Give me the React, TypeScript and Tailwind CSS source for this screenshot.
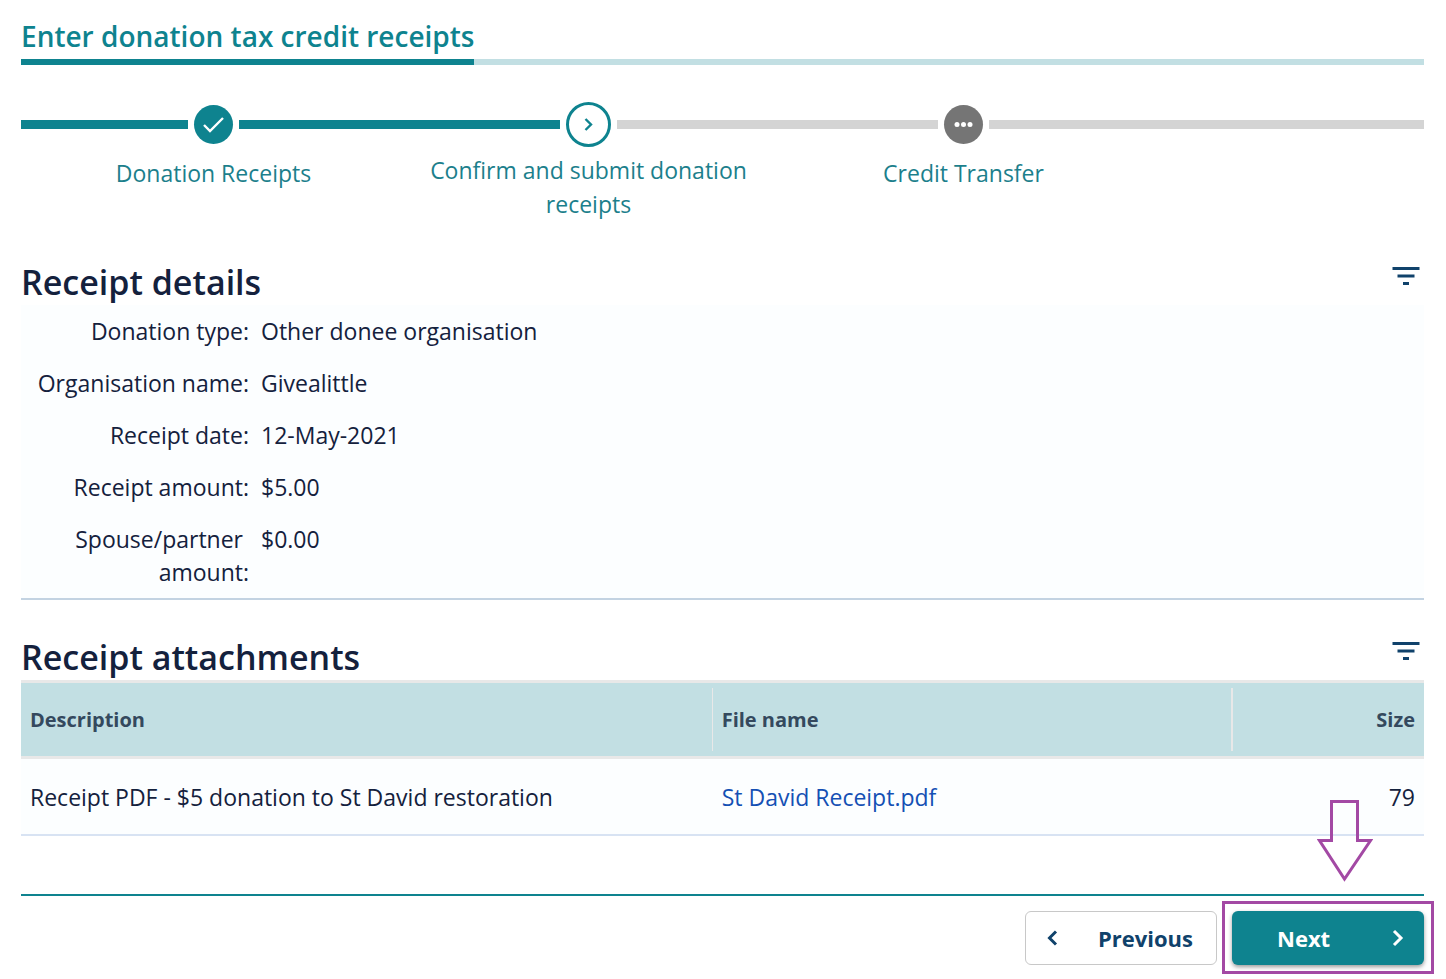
import type { ReactNode } from "react";

type StepState = "done" | "current" | "todo";

const details: { label: ReactNode; value: string }[] = [
  { label: "Donation type:", value: "Other donee organisation" },
  { label: "Organisation name:", value: "Givealittle" },
  { label: "Receipt date:", value: "12-May-2021" },
  { label: "Receipt amount:", value: "$5.00" },
  { label: <>Spouse/partner&nbsp;<br />amount:</>, value: "$0.00" },
];

const attachments = [
  { description: "Receipt PDF - $5 donation to St David restoration", file: "St David Receipt.pdf", size: 79 },
];

export default function App() {
  return (
    <main className="min-h-screen bg-white px-[22px] pt-4 pl-[21px] font-['Open_Sans','Noto_Sans',sans-serif] text-[23px] leading-[34px] text-[#14213d]">
      <PageTitle />
      <Stepper />

      <section className="mt-[39px]">
        <SectionHeader title="Receipt details" />
        <dl className="flex flex-col gap-px border-b-2 border-[#c3d3e2] bg-[#fcfeff] pt-px leading-[33px]">
          {details.map((d) => (
            <div key={d.value} className="flex gap-3 py-[9px]">
              <dt className="w-[228px] shrink-0 text-right">{d.label}</dt>
              <dd>{d.value}</dd>
            </div>
          ))}
        </dl>
      </section>

      <section className="mt-[35px]">
        <SectionHeader title="Receipt attachments" />
        <AttachmentTable />
      </section>

      <footer className="mt-[58px] flex justify-end gap-[15px] border-t-2 border-[#0e838f] pt-[15px] text-[22px]">
        <button
          type="button"
          className="flex h-[54px] w-[192px] items-center justify-between rounded-md border border-[#c8c8c8] bg-white pr-[23px] pl-5 font-bold text-[#10426b]"
        >
          <Chevron dir="left" />
          Previous
        </button>
        <div className="relative">
          <button
            type="button"
            className="flex h-[54px] w-[192px] items-center justify-between rounded-md bg-[#0e838f] pr-[20px] pl-[45px] font-bold text-white shadow-[0_2px_4px_rgba(0,0,0,0.4)]"
          >
            Next
            <Chevron dir="right" />
          </button>
          <NextHighlight />
        </div>
      </footer>
    </main>
  );
}

/* ============ Title with two-tone underline ============ */
function PageTitle() {
  return (
    <header className="flex">
      <h1 className="border-b-[6px] border-[#0e838f] pb-[3px] text-[28px] leading-10 font-semibold text-[#0e838f]">
        Enter donation tax credit receipts
      </h1>
      <div className="flex-1 border-b-[6px] border-[#c2dfe3]" />
    </header>
  );
}

/* ============ Stepper ============ */
function Stepper() {
  return (
    <ol className="mt-[37px] grid grid-cols-[5px_375fr_375fr_375fr_273fr] text-[#1c7f8c]">
      <li aria-hidden="true" className="flex h-[45px] items-center">
        <Track filled />
      </li>
      <Step state="done" label="Donation Receipts" before after />
      <Step state="current" label="Confirm and submit donation receipts" before />
      <Step state="todo" label="Credit Transfer" />
      <li aria-hidden="true" className="flex h-[45px] items-center">
        <Track />
      </li>
    </ol>
  );
}

function Track({ filled = false }: { filled?: boolean }) {
  return <div className={`h-[9px] flex-1 ${filled ? "bg-[#0e838f]" : "bg-[#d4d4d4]"}`} />;
}

function Step({ state, label, before, after }: { state: StepState; label: string; before?: boolean; after?: boolean }) {
  return (
    <li aria-current={state === "current" ? "step" : undefined}>
      <div className="flex h-[45px] items-center gap-[6px]">
        <Track filled={before} />
        <StepDot state={state} />
        <Track filled={after} />
      </div>
      <p className={`px-6 text-center ${state === "current" ? "mt-[6px]" : "mt-[9px]"}`}>{label}</p>
    </li>
  );
}

function StepDot({ state }: { state: StepState }) {
  if (state === "current") {
    return (
      <span className="flex size-[45px] items-center justify-center rounded-full border-[3px] border-[#0e838f] text-[#0e838f]">
        <svg width="9" height="13" viewBox="0 0 9 13" fill="none" stroke="currentColor" strokeWidth="2.4" aria-hidden="true">
          <path d="M1.500 1 7 6.500 1.500 12" />
        </svg>
      </span>
    );
  }
  if (state === "done") {
    return (
      <span className="flex size-[39px] items-center justify-center rounded-full bg-[#0e838f]">
        <svg width="21" height="17" viewBox="0 0 21 17" fill="none" stroke="#fff" strokeWidth="2.4" aria-hidden="true">
          <path d="M1 9 7 15 20 2" />
        </svg>
      </span>
    );
  }
  return (
    <span className="flex size-[39px] items-center justify-center rounded-full bg-[#757575]">
      <svg width="19" height="5" viewBox="0 0 19 5" fill="#fff" aria-hidden="true">
        <circle cx="3" cy="2.500" r="2.500" />
        <circle cx="9.500" cy="2.500" r="2.500" />
        <circle cx="16" cy="2.500" r="2.500" />
      </svg>
    </span>
  );
}

/* ============ Section heading + filter button ============ */
function SectionHeader({ title }: { title: string }) {
  return (
    <div className="flex items-start justify-between">
      <h2 className="text-[34px] leading-[45px] font-semibold">{title}</h2>
      <button type="button" aria-label="Filter" className="mt-[7px] mr-1 text-[#10426b]">
        <svg width="28" height="18" viewBox="0 0 28 18" fill="currentColor" aria-hidden="true">
          <path d="M.5 0h27v3H.5zM5.500 7.500h17v3h-17zM11 15h6v3h-6z" />
        </svg>
      </button>
    </div>
  );
}

/* ============ Attachments ============ */
function AttachmentTable() {
  return (
    <table className="w-full table-fixed border-collapse">
      <colgroup>
        <col className="w-[49.3%]" />
        <col className="w-[37.1%]" />
        <col />
      </colgroup>
      <thead>
        <tr className="border-y-[3px] border-[#e8e8e8] bg-[#c2dfe3] text-left text-[20px] text-[#34495e]">
          <th className="py-[5px]">
            <div className="flex h-[63px] items-center border-r border-[#e8e8e8] px-[9px]">Description</div>
          </th>
          <th className="py-[5px]">
            <div className="flex h-[63px] items-center border-r-2 border-[#e8e8e8] px-[9px]">File name</div>
          </th>
          <th className="px-[9px] text-right">Size</th>
        </tr>
      </thead>
      <tbody>
        {attachments.map((a) => (
          <tr key={a.file} className="h-[77px] border-b-2 border-[#d8e3f3] bg-[#fcfeff]">
            <td className="px-[9px] pt-[2px]">{a.description}</td>
            <td className="px-[9px] pt-[2px]">
              <a href="#" className="text-[#1450b4]">{a.file}</a>
            </td>
            <td className="px-[9px] pt-[2px] text-right">{a.size}</td>
          </tr>
        ))}
      </tbody>
    </table>
  );
}

function Chevron({ dir }: { dir: "left" | "right" }) {
  return (
    <svg width="12" height="18" viewBox="0 0 12 18" fill="none" stroke="currentColor" strokeWidth="3" aria-hidden="true">
      <path d={dir === "left" ? "M10 2.500 3.500 9l6.500 6.500" : "M2 2 9 9l-7 7"} />
    </svg>
  );
}

// purple call-out: a frame round the button and an arrow above it
function NextHighlight() {
  return (
    <div className="pointer-events-none absolute -inset-x-[10px] -top-[10px] -bottom-[9px] border-[3px] border-[#a349a4]">
      <svg
        className="absolute bottom-full left-[92px] mb-[22px]"
        width="56"
        height="83"
        viewBox="0 0 56 83"
        fill="none"
        stroke="#a349a4"
        strokeWidth="3"
        aria-hidden="true"
      >
        <path d="M14.500 2.500h26v39h13L27.500 80 2.500 41.500h12z" />
      </svg>
    </div>
  );
}
